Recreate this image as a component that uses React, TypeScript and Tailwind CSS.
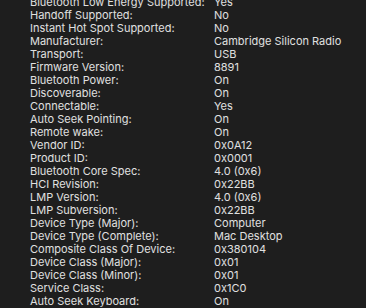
import React from "react";

const rows: [string, string][] = [
  ["Bluetooth Low Energy Supported:", "Yes"],
  ["Handoff Supported:", "No"],
  ["Instant Hot Spot Supported:", "No"],
  ["Manufacturer:", "Cambridge Silicon Radio"],
  ["Transport:", "USB"],
  ["Firmware Version:", "8891"],
  ["Bluetooth Power:", "On"],
  ["Discoverable:", "On"],
  ["Connectable:", "Yes"],
  ["Auto Seek Pointing:", "On"],
  ["Remote wake:", "On"],
  ["Vendor ID:", "0x0A12"],
  ["Product ID:", "0x0001"],
  ["Bluetooth Core Spec:", "4.0 (0x6)"],
  ["HCI Revision:", "0x22BB"],
  ["LMP Version:", "4.0 (0x6)"],
  ["LMP Subversion:", "0x22BB"],
  ["Device Type (Major):", "Computer"],
  ["Device Type (Complete):", "Mac Desktop"],
  ["Composite Class Of Device:", "0x380104"],
  ["Device Class (Major):", "0x01"],
  ["Device Class (Minor):", "0x01"],
  ["Service Class:", "0x1C0"],
  ["Auto Seek Keyboard:", "On"],
];

export default function App() {
  return (
    <div
      className="w-[366px] h-[308px] overflow-hidden bg-[#1e1e1e] text-[#e0e0e0] text-[11px] leading-[13px]"
      style={{ fontFamily: "Inter, 'Liberation Sans', sans-serif" }}
    >
      <div className="flex flex-col -mt-[4px] pl-[30px]">
        {rows.map(([k, v]) => (
          <div key={k} className="flex h-[13px] shrink-0">
            <div className="w-[184px] shrink-0 whitespace-nowrap">{k}</div>
            <div className="whitespace-nowrap">{v}</div>
          </div>
        ))}
      </div>
    </div>
  );
}
